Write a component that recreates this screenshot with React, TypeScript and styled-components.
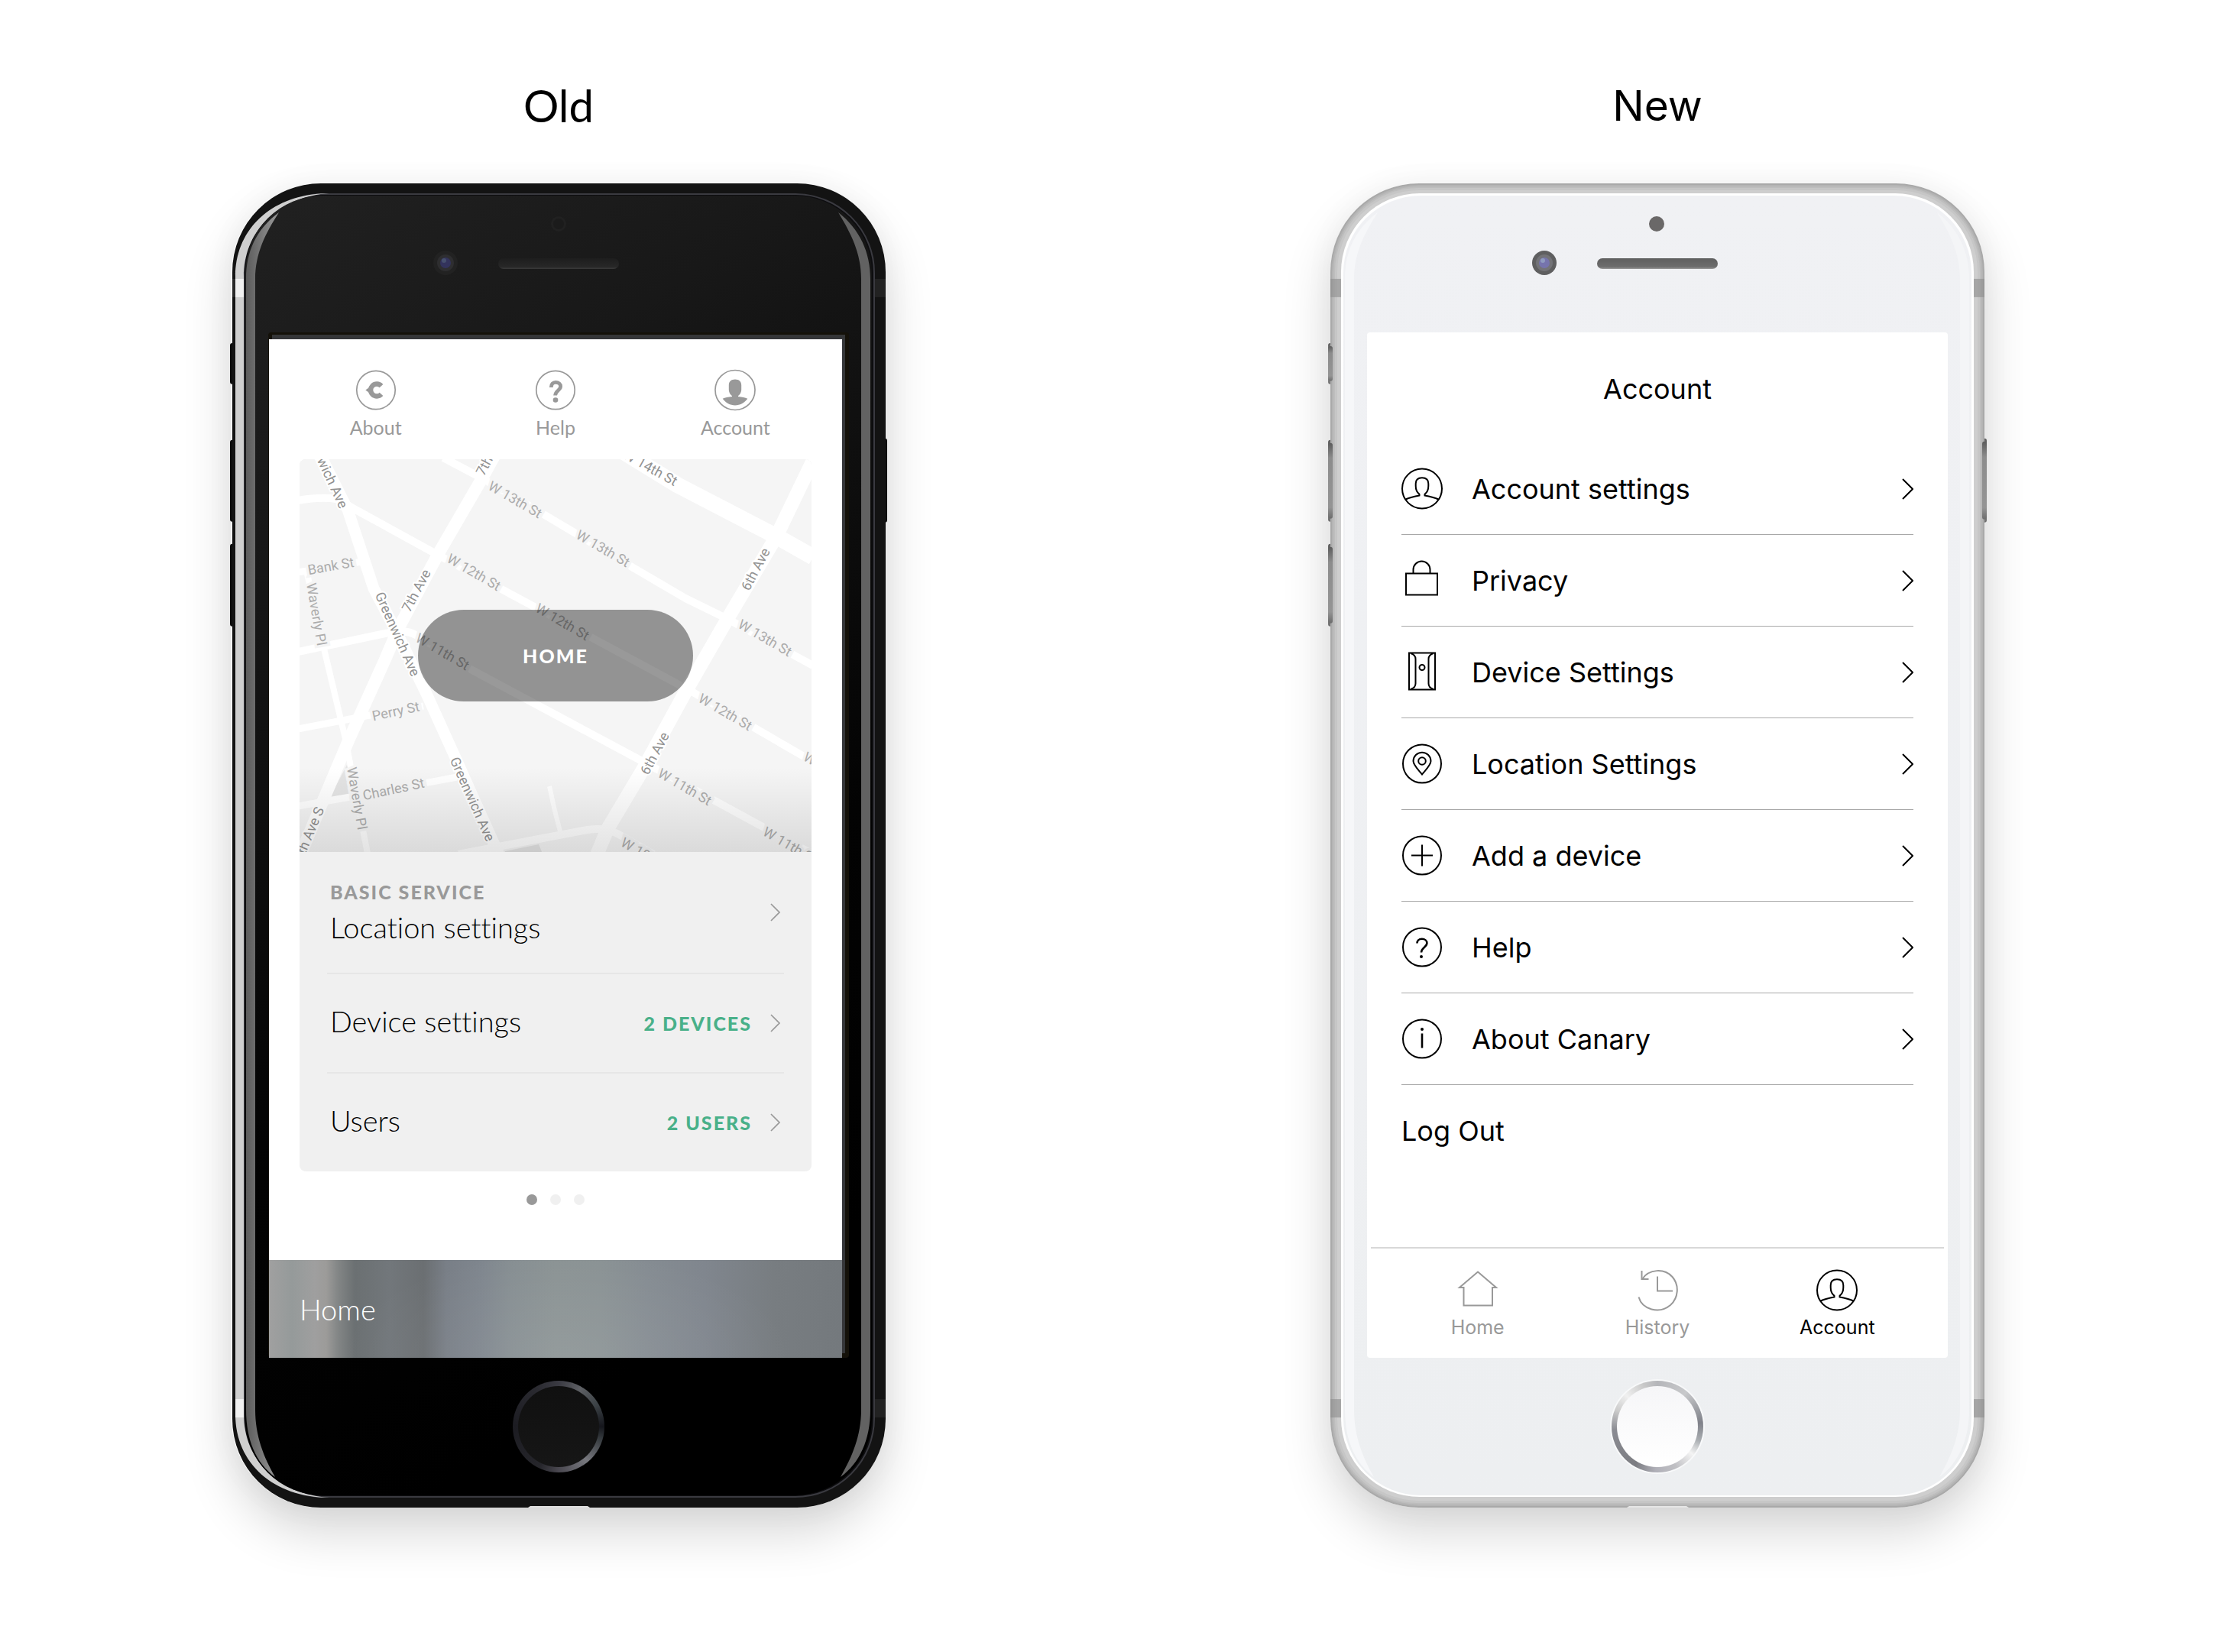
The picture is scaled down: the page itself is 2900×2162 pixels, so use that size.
import React from "react";
import styled, { createGlobalStyle } from "styled-components";

const SANS_OLD = `Lato, "Open Sans", sans-serif`;
const SANS_NEW = `Inter, Roboto, sans-serif`;

const GlobalStyle = createGlobalStyle`
  *, *::before, *::after { box-sizing: border-box; }
  body { margin: 0; background: #fff; color: #000; }
  h1, h2, ul { margin: 0; padding: 0; font-weight: 400; }
  ul { list-style: none; }
  a { color: inherit; text-decoration: none; }
  button { border: 0; margin: 0; padding: 0; background: none; color: inherit; font: inherit; text-align: left; cursor: pointer; }
  svg { display: block; flex: none; }
`;

/* ---------- Page ---------- */

const Page = styled.main`
  display: grid;
  grid-template-columns: repeat(auto-fit, minmax(880px, 1fr));
  padding: 102px 12px 188px;
`;

const Column = styled.section<{ $font: string }>`
  display: flex;
  flex-direction: column;
  align-items: center;
  gap: 66px;
  font-family: ${(p) => p.$font};
  font-variant-ligatures: none;
`;

const ColumnTitle = styled.h1<{ $size: number }>`
  font-size: ${(p) => p.$size}px;
  line-height: 72px;
`;

/* ---------- Phone ---------- */

const Phone = styled.div`
  position: relative;
  width: 100%;
  max-width: 856px;
  padding: 195px 48px 46px;
  border-radius: 116px;
  box-shadow: 0 32px 64px rgba(0, 0, 0, 0.16), 0 0 40px rgba(0, 0, 0, 0.04);
`;

const Shell = styled.svg`
  position: absolute;
  inset: 0;
  width: 100%;
  height: 100%;
  overflow: visible;
`;

const Screen = styled.div<{ $dark?: boolean }>`
  position: relative;
  padding: ${(p) => (p.$dark ? "9px 9px 0 1px" : "0")};
  border-radius: 4px;
  background: ${(p) => (p.$dark ? "#141109" : "#fff")};
`;

const Chin = styled.div`
  position: relative;
  display: flex;
  justify-content: center;
  padding-top: 30px;
`;

const HomeKey = styled.button<{ $dark?: boolean }>`
  width: 120px;
  height: 120px;
  padding: 7px;
  border-radius: 50%;
  background: ${(p) =>
    p.$dark
      ? "conic-gradient(#3a3a42, #5e6064 30deg, #3c4246 60deg, #15161c 90deg, #33383c 105deg, #77787e 140deg, #4a4850 180deg, #26262b 205deg, #1c1c22 270deg, #2a2a30 330deg, #3a3a42)"
      : "conic-gradient(#b5b6ba, #c8c9cb 40deg, #80828a 85deg, #a9adb1 108deg, #f4f4f4 128deg, #c0c0c4 155deg, #b0b0b8 182deg, #7c7d82 210deg, #8a8b92 265deg, #cccccc 292deg, #f0f0f0 315deg, #c8c8c8 342deg, #b5b6ba)"};
  box-shadow: ${(p) => (p.$dark ? "none" : "0 0 0 2px #f8f9fa")};

  &::before {
    content: "";
    display: block;
    width: 100%;
    height: 100%;
    border-radius: 50%;
    background: ${(p) => (p.$dark ? "linear-gradient(#101010, #161616)" : "linear-gradient(#f6f6f8, #fff)")};
  }
`;

const LEFT_GLASS =
  "M62 38C32 60 19 90 19 125V1606C19 1645 32 1676 57 1694C42 1668 31 1640 31 1606V125C31 92 44 66 62 38Z";
const RIGHT_GLASS =
  "M794 38C822 60 836 90 836 125V1606C836 1645 822 1676 797 1694C812 1668 824 1640 824 1606V125C824 92 811 66 794 38Z";

const DarkShell = () => (
  <Shell viewBox="0 0 856 1734" preserveAspectRatio="none" aria-hidden="true">
    <defs>
      <linearGradient id="darkFace" x1="0" y1="0" x2="0.3" y2="1">
        <stop offset="0" stopColor="#212121" />
        <stop offset="0.25" stopColor="#181818" />
        <stop offset="0.7" stopColor="#030303" />
        <stop offset="1" stopColor="#000" />
      </linearGradient>
      <linearGradient id="darkEdge">
        <stop offset="0" stopColor="#5c5c5c" />
        <stop offset="1" stopColor="#9a9a9a" />
      </linearGradient>
      <linearGradient id="darkSpeaker" x1="0" y1="0" x2="0" y2="1">
        <stop offset="0" stopColor="#1e1e1e" />
        <stop offset="0.8" stopColor="#272727" />
        <stop offset="1" stopColor="#3a3a3a" />
      </linearGradient>
    </defs>
    <g fill="#0c0c0c">
      <rect x="-2" y="209" width="8" height="54" rx="3" />
      <rect x="-2" y="336" width="8" height="107" rx="3" />
      <rect x="-2" y="472" width="8" height="108" rx="3" />
      <rect x="850" y="334" width="8" height="110" rx="3" />
    </g>
    <rect x="1" width="855" height="1734" rx="116" fill="#131313" />
    <rect x="1" y="125" width="4" height="24" fill="#2a2a2a" />
    <rect x="841" y="125" width="15" height="24" fill="#222" />
    <rect x="841" y="1592" width="15" height="24" fill="#222" />
    <rect x="16" y="14" width="825" height="1706" rx="103" fill="#0d0d0f" stroke="#3a3a40" strokeWidth="2" />
    <path d="M128 13C55 13 5 58 5 122V1612C5 1676 55 1721 128 1721C62 1717 16 1672 16 1612V122C16 62 62 17 128 13Z" fill="#cfcfcf" />
    <rect x="5" y="125" width="11" height="24" fill="#f1f1f1" />
    <rect x="5" y="1592" width="11" height="24" fill="#f1f1f1" />
    <rect x="18" y="16" width="820" height="1702" rx="101" fill="url(#darkFace)" />
    <path d={LEFT_GLASS} fill="url(#darkEdge)" />
    <path d={RIGHT_GLASS} fill="#626262" />
    <circle cx="428" cy="53" r="10" fill="#212121" />
    <circle cx="428" cy="53" r="7" fill="#1b1b1b" />
    <circle cx="280" cy="104" r="16" fill="#222" />
    <circle cx="280" cy="104" r="11" fill="#2e2e30" />
    <circle cx="280" cy="104" r="7" fill="#33335c" />
    <circle cx="278" cy="101" r="3" fill="#46506e" />
    <rect x="349" y="98" width="158" height="14" rx="7" fill="url(#darkSpeaker)" />
    <path d="M388 1734L391 1732H466L469 1734Z" fill="#e0e0e0" />
  </Shell>
);

const LightShell = () => (
  <Shell viewBox="0 0 856 1734" preserveAspectRatio="none" aria-hidden="true">
    <defs>
      <linearGradient id="lightFace" x1="0" y1="0" x2="0" y2="1">
        <stop offset="0" stopColor="#f0f1f4" />
        <stop offset="1" stopColor="#edeff1" />
      </linearGradient>
      <linearGradient id="lightKey" x1="0" y1="0" x2="0" y2="1">
        <stop offset="0" stopColor="#5c5c5c" />
        <stop offset="0.2" stopColor="#8c8c8c" />
        <stop offset="0.85" stopColor="#949494" />
        <stop offset="1" stopColor="#6c6c6c" />
      </linearGradient>
      <linearGradient id="lightSpeaker" x1="0" y1="0" x2="0" y2="1">
        <stop offset="0" stopColor="#5f5f5f" />
        <stop offset="0.8" stopColor="#6d6d6d" />
        <stop offset="1" stopColor="#999" />
      </linearGradient>
    </defs>
    <g fill="url(#lightKey)">
      <rect x="-3" y="209" width="8" height="54" rx="3" />
      <rect x="-3" y="336" width="8" height="107" rx="3" />
      <rect x="-3" y="472" width="8" height="108" rx="3" />
      <rect x="851" y="334" width="8" height="110" rx="3" />
    </g>
    <rect width="856" height="1734" rx="116" fill="#a9a9a9" />
    <rect x="2" y="2" width="852" height="1730" rx="114" fill="#b4b4b4" />
    <rect x="4" y="4" width="848" height="1726" rx="112" fill="#bdbdbd" />
    <rect x="6" y="6" width="844" height="1722" rx="110" fill="#c6c6c6" />
    <rect x="9" y="9" width="838" height="1716" rx="107" fill="#cecece" />
    <g fill="url(#lightKey)">
      <rect x="-3" y="213" width="6" height="46" rx="3" />
      <rect x="-3" y="340" width="6" height="99" rx="3" />
      <rect x="-3" y="476" width="6" height="100" rx="3" />
      <rect x="853" y="338" width="6" height="102" rx="3" />
    </g>
    <g fill="#8c8c8c" fillOpacity="0.6">
      <rect y="125" width="15" height="24" />
      <rect x="841" y="125" width="15" height="24" />
      <rect y="1592" width="15" height="24" />
      <rect x="841" y="1592" width="15" height="24" />
    </g>
    <rect x="14" y="13" width="828" height="1707" rx="103" fill="#fff" />
    <rect x="17" y="16" width="822" height="1702" rx="101" fill="url(#lightFace)" />
    <path d={LEFT_GLASS} fill="#f6f7f9" />
    <path d={RIGHT_GLASS} fill="#f4f5f7" />
    <circle cx="427" cy="53" r="10" fill="#6a6868" />
    <circle cx="280" cy="104" r="16" fill="#5f5f60" />
    <circle cx="280" cy="104" r="11" fill="#737377" />
    <circle cx="280" cy="104" r="7" fill="#7674ad" />
    <circle cx="278" cy="101" r="3" fill="#8f9bc0" />
    <rect x="349" y="98" width="158" height="14" rx="7" fill="url(#lightSpeaker)" />
    <path d="M388 1734L391 1732H466L469 1734Z" fill="#e6e6e6" />
  </Shell>
);

/* ---------- Icons ---------- */

type IconProps = { children: React.ReactNode; weight?: number };

const Icon = ({ children, weight = 2 }: IconProps) => (
  <svg width="54" height="55" viewBox="0 0 54 54" fill="none" stroke="currentColor" strokeWidth={weight} aria-hidden="true">
    {children}
  </svg>
);

const UserIcon = () => (
  <Icon>
    <circle cx="27" cy="27" r="26" />
    <path d="M5.5 41C11 38.7 17 37.2 23.5 36V34.4C20.5 32 18.7 27.5 18.7 23.5V20.5C18.7 15.5 22 12.8 27 12.8S35.3 15.5 35.3 20.5V23.5C35.3 27.5 33.5 32 30.5 34.4V36C37 37.2 43 38.7 48.5 41" />
  </Icon>
);
const LockIcon = () => (
  <Icon>
    <rect x="6" y="18" width="41" height="28" />
    <path d="M15.5 18V13A11 11 0 0 1 37.5 13V18" />
  </Icon>
);
const DeviceIcon = () => (
  <Icon>
    <rect x="10" y="2" width="34" height="48" />
    <path d="M12 2.5C17 4 18.5 6 18.5 10V42C18.5 46 17 48 12 49.5M42 2.5C37 4 35.5 6 35.5 10V42C35.5 46 37 48 42 49.5" />
    <circle cx="27" cy="21" r="3.5" />
  </Icon>
);
const PinIcon = () => (
  <Icon>
    <circle cx="27" cy="27" r="25" />
    <path d="M27 41C22 35 15.5 28.5 15.5 23.5A11.5 11.2 0 0 1 38.5 23.5C38.5 28.5 32 35 27 41Z" />
    <circle cx="27" cy="23.5" r="4.8" />
  </Icon>
);
const PlusIcon = () => (
  <Icon>
    <circle cx="27" cy="27" r="25" />
    <path d="M27 13V41M13 27H41" />
  </Icon>
);
const HelpIcon = () => (
  <Icon>
    <circle cx="27" cy="27" r="25" />
    <path strokeWidth="2.6" d="M20.5 22C20.5 18.5 22.8 16.3 26.8 16.3S33.4 18.7 33.4 21.8C33.4 27 26 27.6 26 34" />
    <circle cx="26" cy="39.5" r="2" fill="currentColor" stroke="none" />
  </Icon>
);
const InfoIcon = () => (
  <Icon>
    <circle cx="27" cy="27" r="25" />
    <path strokeWidth="2.6" d="M27 20V39" />
    <circle cx="27" cy="14.5" r="2" fill="currentColor" stroke="none" />
  </Icon>
);
const HouseIcon = () => (
  <Icon>
    <path d="M27 3L51 23.5H46V47H8.5V23.5H3Z" />
  </Icon>
);
const HistoryIcon = () => (
  <Icon>
    <path d="M7 12.5C16 -1 36 -2 46.5 9.5C56 20.5 54.5 37 44 46.5C29 59 7 52 2.5 36" />
    <path d="M6.5 1.5V12.5H15.5" />
    <path d="M27 9V28H47" />
  </Icon>
);

const CanaryIcon = () => (
  <Icon weight={1.7}>
    <circle cx="27" cy="27" r="25.2" />
    <path strokeWidth="6.4" d="M34 21.6A8 8 0 1 0 34 32.4" />
    <path d="M13.3 27L21 21.5V32.5Z" fill="currentColor" stroke="none" />
  </Icon>
);
const BoldHelpIcon = () => (
  <Icon weight={1.7}>
    <circle cx="27" cy="27" r="25.2" />
    <path strokeWidth="4.8" d="M21.3 23.6C21.3 19.4 23.5 16.8 27.2 16.8S33.6 19 33.6 22.2C33.6 27.4 26.8 27.6 26.6 34" />
    <circle cx="27" cy="40" r="3.3" fill="currentColor" stroke="none" />
  </Icon>
);
const BoldUserIcon = () => (
  <Icon weight={1.7}>
    <circle cx="27" cy="27" r="26" />
    <path
      fill="currentColor"
      stroke="none"
      d="M18.8 20.5C18.8 15.7 22 13 27 13S35.2 15.7 35.2 20.5V26.5C35.2 30 33 33.5 31 34.6V35.4C36 35.8 40 36.7 43.3 38.3C39 43.8 33.5 47 27 47S15 43.8 10.7 38.3C14 36.7 18 35.8 23 35.4V34.6C21 33.5 18.8 30 18.8 26.5Z"
    />
  </Icon>
);

const Chevron = ({ small }: { small?: boolean }) => (
  <svg
    width={small ? 14 : 16}
    height={small ? 24 : 28}
    viewBox={small ? "0 0 14 24" : "0 0 16 28"}
    fill="none"
    stroke={small ? "#999" : "#000"}
    strokeWidth={small ? 1.7 : 2}
    aria-hidden="true"
  >
    <path d={small ? "M1 1L12 12L1 23" : "M2 1L15 14L2 27"} />
  </svg>
);

/* ---------- Shared icon-over-label bar ---------- */

const IconBar = styled.nav<{ $tabs?: boolean }>`
  display: grid;
  grid-template-columns: repeat(3, 1fr);
  margin: ${(p) => (p.$tabs ? "93px 5px 0" : "0")};
  padding: ${(p) => (p.$tabs ? "27px 22px 24px" : "39px 22px 26px")};
  border-top: ${(p) => (p.$tabs ? "2px solid #d8d8d8" : "0")};
`;

const IconLink = styled.a<{ $active?: boolean }>`
  display: flex;
  flex-direction: column;
  align-items: center;
  gap: 5px;
  color: ${(p) => (p.$active ? "#000" : "#999")};
  font-size: 25px;
  line-height: 32px;
`;

/* ---------- Old app ---------- */

const OldApp = styled.div`
  background: #fff;
  box-shadow: 4px -6px 0 #353638;
`;

const Card = styled.section`
  margin: 0 40px;
  overflow: hidden;
  border-radius: 8px;
  background: #f0f0f0;
`;

const MapArea = styled.div`
  display: grid;
  height: 514px;
  > * { grid-area: 1 / 1; }
`;

const MapSvg = styled.svg`
  width: 100%;
  height: 100%;
  font-family: Roboto, sans-serif;
`;

const HomePill = styled.button`
  z-index: 1;
  place-self: center;
  width: 360px;
  height: 120px;
  border-radius: 60px;
  background: rgba(0, 0, 0, 0.4);
  color: #fff;
  font-size: 25px;
  font-weight: 900;
  letter-spacing: 2px;
  line-height: 32px;
  text-align: center;
`;

const OldList = styled.ul`
  padding: 0 36px;
`;

const OldItem = styled.li`
  & + & { border-top: 2px solid #e6e6e6; }
`;

const OldRow = styled.button`
  display: flex;
  align-items: center;
  width: 100%;
  min-height: 128px;
  padding: 32px 4px;
`;

const OldText = styled.span<{ $stacked?: boolean }>`
  display: grid;
  flex: 1;
  gap: 6px;
  padding: ${(p) => (p.$stacked ? "4px 0" : "0 0 6px")};
  font-size: 38px;
  font-weight: 300;
  line-height: 48px;
`;

const Tag = styled.span<{ $green?: boolean }>`
  margin-right: ${(p) => (p.$green ? "24px" : "0")};
  color: ${(p) => (p.$green ? "#49b089" : "#999")};
  font-size: 25px;
  font-weight: 900;
  letter-spacing: 2px;
  line-height: 32px;
`;

const Dots = styled.div`
  display: flex;
  justify-content: center;
  gap: 17px;
  padding: 30px 0 72px;
`;

const Dot = styled.button<{ $on?: boolean }>`
  width: 14px;
  height: 14px;
  border-radius: 50%;
  background: ${(p) => (p.$on ? "#999" : "#f0f0f0")};
`;

const PhotoBar = styled.a`
  display: block;
  padding: 40px;
  background:
    radial-gradient(ellipse 40% 110% at 52% 100%, rgba(255, 255, 255, 0.08), transparent),
    linear-gradient(90deg, #a0a0a0, #959a9a 4%, #9f9f9f 8%, #9c9b99 10%, #838686 12%, #6b7072 15%, #72777b 21%, #6b6f72 27%, #797f87 31%, #7f868e 37%, #868e92 42%, #8b9394 50%, #8a9294 58%, #858c92 66%, #80868e 76%, #787d81 88%, #74797d);
  color: #fff;
  font-size: 38px;
  font-weight: 300;
  line-height: 48px;
`;

type Label = { t: string; x: number; y: number; r: number; main?: boolean; anchor?: "start" | "end" };

const STREETS: { d: string; w: number }[] = [
  { d: "M24 -12L63 66L97 169L127 226L167 309L201 384L262 520", w: 15 },
  { d: "M-2 54C14 51 26 50 40 51C52 52 58 56 66 62L177 123L515 305L672 396", w: 10 },
  { d: "M188 -2L241 26L321 73L435 141L505 182L560 209L672 270", w: 10 },
  { d: "M420 -12L495 34L624 101L672 128", w: 21 },
  { d: "M690 -36L624 101L560 209L507 301L450 405L403 484L388 520", w: 18 },
  { d: "M256 -6L236 30L182 123L129 222L112 262L65 366L32 444L0 520", w: 16 },
  { d: "M-2 252L112 228C130 224 142 224 152 230L226 276L450 396L672 517", w: 10 },
  { d: "M10 150L32 248L60 366L82 480L89 516", w: 8 },
  { d: "M-2 148L82 134", w: 9 },
  { d: "M-2 353L92 335L162 323", w: 9 },
  { d: "M-2 454L72 441L206 416", w: 9 },
  { d: "M208 517L371 486C390 482 402 484 416 490L465 518", w: 10 },
  { d: "M327 428L334 460L341 487", w: 6 },
];

const LABELS: Label[] = [
  { t: "Greenwich Ave", x: 58, y: 63, r: 65, main: true, anchor: "end" },
  { t: "7th Ave", x: 236, y: 20, r: -62, main: true, anchor: "start" },
  { t: "W 14th St", x: 493, y: 30, r: 29, main: true, anchor: "end" },
  { t: "W 13th St", x: 282, y: 53, r: 30 },
  { t: "W 13th St", x: 397, y: 117, r: 30 },
  { t: "W 13th St", x: 609, y: 234, r: 30 },
  { t: "W 12th St", x: 228, y: 148, r: 30 },
  { t: "W 12th St", x: 344, y: 213, r: 30 },
  { t: "W 12th St", x: 557, y: 331, r: 30 },
  { t: "W 12th St", x: 661, y: 388, r: 30, anchor: "start" },
  { t: "W 11th St", x: 187, y: 252, r: 30 },
  { t: "W 11th St", x: 504, y: 429, r: 30 },
  { t: "W 11th St", x: 608, y: 486, r: 30, anchor: "start" },
  { t: "W 10th St", x: 422, y: 500, r: 30, anchor: "start" },
  { t: "Bank St", x: 41, y: 140, r: -10 },
  { t: "Perry St", x: 126, y: 330, r: -12 },
  { t: "Charles St", x: 123, y: 432, r: -12 },
  { t: "Waverly Pl", x: 22, y: 203, r: 80 },
  { t: "Waverly Pl", x: 75, y: 444, r: 80 },
  { t: "Greenwich Ave", x: 128, y: 229, r: 66, main: true },
  { t: "Greenwich Ave", x: 226, y: 445, r: 66, main: true },
  { t: "7th Ave", x: 153, y: 172, r: -62, main: true },
  { t: "6th Ave", x: 597, y: 144, r: -62, main: true },
  { t: "6th Ave", x: 465, y: 385, r: -62, main: true },
  { t: "7th Ave S", x: 27, y: 456, r: -67, main: true, anchor: "end" },
];

const StreetMap = () => (
  <MapSvg viewBox="0 0 670 514" preserveAspectRatio="xMidYMid slice" role="img" aria-label="Street map">
    <defs>
      <linearGradient id="mapShade" x1="0" y1="0" x2="0" y2="1">
        <stop offset="0" stopColor="#000" stopOpacity="0" />
        <stop offset="1" stopColor="#000" stopOpacity="0.11" />
      </linearGradient>
    </defs>
    <rect width="670" height="514" fill="#f5f5f5" />
    <path d="M62 400L40 442L70 438Z M269 513L313 504L318 516H269Z" fill="#e4e4e4" />
    {STREETS.map((s) => (
      <path key={s.d} d={s.d} stroke="#fff" strokeWidth={s.w} fill="none" strokeLinejoin="round" />
    ))}
    {LABELS.map((l, i) => (
      <text
        key={i}
        transform={`translate(${l.x} ${l.y}) rotate(${l.r})`}
        dy="6"
        textAnchor={l.anchor ?? "middle"}
        fontSize={18}
        fill={l.main ? "#929292" : "#acacac"}
        stroke={l.main ? "#fff" : "#f5f5f5"}
        strokeWidth={l.main ? 4 : 7}
        paintOrder="stroke"
      >
        {l.t}
      </text>
    ))}
    <rect y="404" width="670" height="110" fill="url(#mapShade)" />
  </MapSvg>
);

const OldPhone = () => (
  <Phone>
    <DarkShell />
    <Screen $dark>
      <OldApp>
        <IconBar aria-label="Main">
          <IconLink href="#about"><CanaryIcon />About</IconLink>
          <IconLink href="#help"><BoldHelpIcon />Help</IconLink>
          <IconLink href="#account"><BoldUserIcon />Account</IconLink>
        </IconBar>
        <Card>
          <MapArea>
            <StreetMap />
            <HomePill type="button">HOME</HomePill>
          </MapArea>
          <OldList>
            <OldItem>
              <OldRow type="button">
                <OldText $stacked><Tag>BASIC SERVICE</Tag>Location settings</OldText>
                <Chevron small />
              </OldRow>
            </OldItem>
            <OldItem>
              <OldRow type="button">
                <OldText>Device settings</OldText>
                <Tag $green>2 DEVICES</Tag>
                <Chevron small />
              </OldRow>
            </OldItem>
            <OldItem>
              <OldRow type="button">
                <OldText>Users</OldText>
                <Tag $green>2 USERS</Tag>
                <Chevron small />
              </OldRow>
            </OldItem>
          </OldList>
        </Card>
        <Dots>
          <Dot type="button" aria-label="Location 1" $on />
          <Dot type="button" aria-label="Location 2" />
          <Dot type="button" aria-label="Location 3" />
        </Dots>
        <PhotoBar href="#home">Home</PhotoBar>
      </OldApp>
    </Screen>
    <Chin>
      <HomeKey type="button" aria-label="Home button" $dark />
    </Chin>
  </Phone>
);

/* ---------- New app ---------- */

const ScreenTitle = styled.h2`
  padding: 50px 0 47px;
  font-size: 36px;
  line-height: 48px;
  text-align: center;
`;

const NewList = styled.ul`
  padding: 0 45px;
`;

const NewItem = styled.li`
  border-bottom: 1px solid #a8a8a8;
  &:last-child { border-bottom: 0; }
`;

const NewRow = styled.button`
  display: flex;
  align-items: center;
  gap: 38px;
  width: 100%;
  min-height: 119px;
  padding: 32px 0;
  font-size: 36px;
  line-height: 48px;
`;

const NewText = styled.span`
  flex: 1;
`;

const MENU: { label: string; Glyph: React.FC }[] = [
  { label: "Account settings", Glyph: UserIcon },
  { label: "Privacy", Glyph: LockIcon },
  { label: "Device Settings", Glyph: DeviceIcon },
  { label: "Location Settings", Glyph: PinIcon },
  { label: "Add a device", Glyph: PlusIcon },
  { label: "Help", Glyph: HelpIcon },
  { label: "About Canary", Glyph: InfoIcon },
];

const NewPhone = () => (
  <Phone>
    <LightShell />
    <Screen>
      <ScreenTitle>Account</ScreenTitle>
      <NewList>
        {MENU.map(({ label, Glyph }) => (
          <NewItem key={label}>
            <NewRow type="button">
              <Glyph />
              <NewText>{label}</NewText>
              <Chevron />
            </NewRow>
          </NewItem>
        ))}
        <NewItem>
          <NewRow type="button">Log Out</NewRow>
        </NewItem>
      </NewList>
      <IconBar $tabs aria-label="Tabs">
        <IconLink href="#home"><HouseIcon />Home</IconLink>
        <IconLink href="#history"><HistoryIcon />History</IconLink>
        <IconLink href="#account" $active aria-current="page"><UserIcon />Account</IconLink>
      </IconBar>
    </Screen>
    <Chin>
      <HomeKey type="button" aria-label="Home button" />
    </Chin>
  </Phone>
);

export default function App() {
  return (
    <>
      <GlobalStyle />
      <Page>
        <Column $font={SANS_OLD}>
          <ColumnTitle $size={58}>Old</ColumnTitle>
          <OldPhone />
        </Column>
        <Column $font={SANS_NEW}>
          <ColumnTitle $size={55}>New</ColumnTitle>
          <NewPhone />
        </Column>
      </Page>
    </>
  );
}
